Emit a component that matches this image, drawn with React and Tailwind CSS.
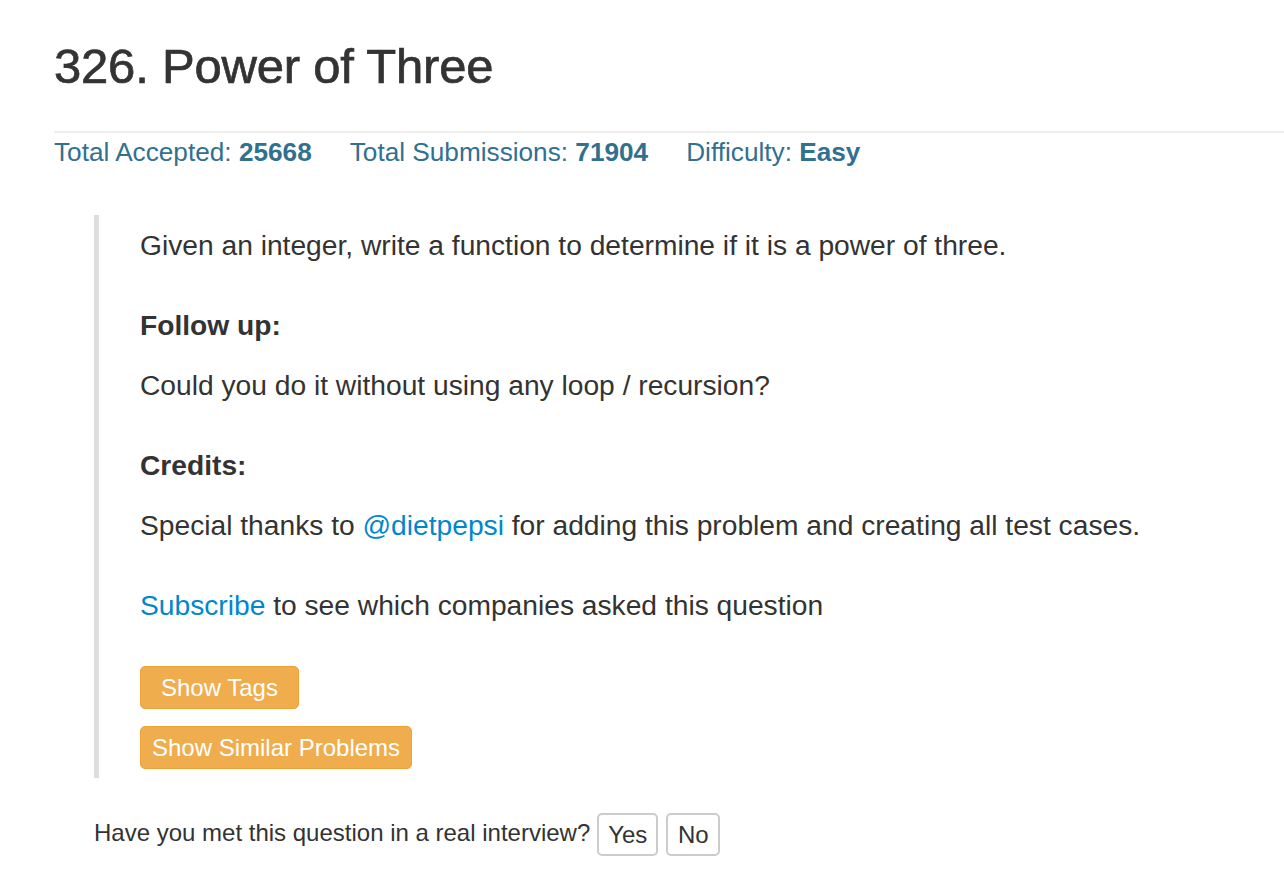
export default function App() {
  return (
    <div
      className="min-h-[874px] bg-white pl-[54px] pt-[40px] text-[#333333]"
      style={{ fontFamily: '"Liberation Sans", Arial, Helvetica, sans-serif' }}
    >
      <h1 className="text-[49px] leading-[53px] font-normal tracking-[-0.2px] [-webkit-text-stroke:0.7px_#333333]">
        326. Power of Three
      </h1>
      <div className="mt-[38px] h-[2px] bg-[#eeeeee]" />
      <div className="mt-[2px] flex gap-[38px] text-[26.2px] leading-[34px] text-[#31708f]">
        <span>
          Total Accepted: <b>25668</b>
        </span>
        <span>
          Total Submissions: <b>71904</b>
        </span>
        <span>
          Difficulty: <b>Easy</b>
        </span>
      </div>
      <div className="ml-[40px] mt-[46px] w-[1100px] border-l-[5px] border-[#dddddd] pl-[41px] pt-[13px] pb-[9px] text-[28.2px] leading-[34px]">
        <p className="mb-[46px]">Given an integer, write a function to determine if it is a power of three.</p>
        <p className="mb-[26px] font-bold">Follow up:</p>
        <p className="mb-[46px]">Could you do it without using any loop / recursion?</p>
        <p className="mb-[26px] font-bold">Credits:</p>
        <p className="mb-[46px]">
          Special thanks to <a className="text-[#0088cc]">@dietpepsi</a> for adding this problem and creating all test cases.
        </p>
        <p>
          <a className="text-[#0088cc]">Subscribe</a> to see which companies asked this question
        </p>
        <div className="mt-[44px] flex flex-col items-start gap-[17px]">
          <button className="h-[43px] rounded-[5px] border border-[#eea236] bg-[#f0ad4e] px-[20px] text-[24px] text-white">
            Show Tags
          </button>
          <button className="h-[43px] rounded-[5px] border border-[#eea236] bg-[#f0ad4e] px-[11px] text-[24px] text-white">
            Show Similar Problems
          </button>
        </div>
      </div>
      <div className="ml-[40px] mt-[35px] flex items-center text-[24px]">
        <span className="mr-[7px] -mt-[3px]">Have you met this question in a real interview?</span>
        <button className="mr-[8px] h-[43px] w-[61px] rounded-[5px] border-2 border-[#cccccc] bg-white text-[24px] text-[#333333]">
          Yes
        </button>
        <button className="h-[43px] w-[54px] rounded-[5px] border-2 border-[#cccccc] bg-white text-[24px] text-[#333333]">
          No
        </button>
      </div>
    </div>
  );
}
